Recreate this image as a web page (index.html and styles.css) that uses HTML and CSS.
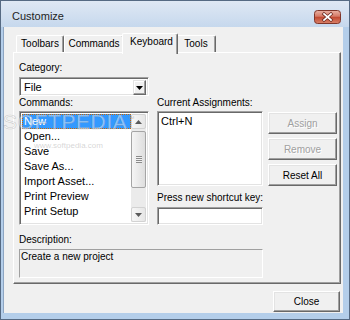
FILE: index.html
```html
<!DOCTYPE html>
<html lang="en">
<head>
  <meta charset="UTF-8" />
  <meta name="viewport" content="width=device-width, initial-scale=1.0"/>
  <title>Customize</title>
  <link rel="stylesheet" href="styles.css">
</head>
<body>

  <div class="window">
    <div class="titlebar">
      <span class="title">Customize</span>
      <div class="btn-close-x">
        <svg width="27" height="14" viewBox="0 0 27 14">
          <defs>
            <linearGradient id="rojo" x1="0" y1="0" x2="0" y2="1">
              <stop offset="0" stop-color="#eab2a4"/>
              <stop offset="0.45" stop-color="#d57a66"/>
              <stop offset="0.5" stop-color="#c1472f"/>
              <stop offset="1" stop-color="#d9826a"/>
            </linearGradient>
          </defs>
          <rect x="0.5" y="0.5" width="26" height="13" rx="3" fill="url(#rojo)" stroke="#80362a"/>
          <path d="M10 4 L17 10 M17 4 L10 10" stroke="#6b2a20" stroke-width="3.2" stroke-linecap="square"/>
          <path d="M10 4 L17 10 M17 4 L10 10" stroke="#fff" stroke-width="1.7" stroke-linecap="square"/>
        </svg>
      </div>
    </div>

    <div class="client">
      <div class="tabs">
        <div class="tab w-toolbars">Toolbars</div>
        <div class="tab w-commands">Commands</div>
        <div class="tab tab-active">Keyboard</div>
        <div class="tab w-tools">Tools</div>
      </div>

      <div class="panel">
        <div class="label">Category:</div>
        <div class="combo sunken">
          <span class="combo-text">File</span>
          <div class="combo-btn">
            <svg width="7" height="4" viewBox="0 0 7 4"><polygon points="0,0 7,0 3.5,4" fill="#000"/></svg>
          </div>
        </div>

        <div class="row">
          <div class="col-left">
            <div class="label">Commands:</div>
            <div class="list sunken">
              <ul class="items">
                <li class="selected">New</li>
                <li>Open...</li>
                <li>Save</li>
                <li>Save As...</li>
                <li>Import Asset...</li>
                <li>Print Preview</li>
                <li>Print Setup</li>
                <li>Print</li>
              </ul>
              <div class="scroll">
                <div class="scroll-btn">
                  <svg width="7" height="4" viewBox="0 0 7 4"><polygon points="0,4 7,4 3.5,0" fill="#5a5a5a"/></svg>
                </div>
                <div class="track">
                  <div class="thumb"><span class="grip"></span></div>
                </div>
                <div class="scroll-btn">
                  <svg width="7" height="4" viewBox="0 0 7 4"><polygon points="0,0 7,0 3.5,4" fill="#5a5a5a"/></svg>
                </div>
              </div>
            </div>
          </div>

          <div class="col-mid">
            <div class="label">Current Assignments:</div>
            <div class="assign-box sunken">Ctrl+N</div>
            <div class="label label-press">Press new shortcut key:</div>
            <div class="key-input sunken"></div>
          </div>

          <div class="col-btns">
            <button class="btn disabled">Assign</button>
            <button class="btn disabled">Remove</button>
            <button class="btn">Reset All</button>
          </div>
        </div>

        <div class="label label-desc">Description:</div>
        <div class="description">Create a new project</div>
      </div>

      <div class="footer">
        <button class="btn btn-close">Close</button>
      </div>
    </div>

    <!-- marca de agua de la captura -->
    <div class="watermark">SOFTPEDIA<sup>™</sup></div>
    <div class="watermark-url">www.softpedia.com</div>
  </div>

</body>
</html>
```

FILE: styles.css
```css
    body {
      margin: 0;
      font-family: "Liberation Sans", Arial, sans-serif;
      font-size: 10px;
      color: #000;
    }
    .window {
      position: relative;
      width: 350px;
      height: 320px;
      box-sizing: border-box;
      border: 1px solid #566a83;
      padding: 0 6px 6px 3px;
      background: linear-gradient(#dfe8f4 0, #c6d8ed 26px, #b4ceea 26px);
      overflow: hidden;
    }
    .titlebar {
      height: 26px;
      display: flex;
      align-items: flex-start;
      justify-content: space-between;
      padding: 9px 2px 0 8px;
      box-sizing: border-box;
    }
    .title {
      font-size: 11px;
      line-height: 13px;
      color: #1e1e1e;
    }
    .btn-close-x svg {
      display: block;
    }
    .client {
      height: 286px;
      background-color: #f0f0f0;
      box-shadow: -1px 0 0 #8da5c2;
    }
    .tabs {
      display: flex;
      align-items: flex-end;
      height: 25px;
      padding-left: 12px;
    }
    .tab {
      height: 17px;
      box-sizing: border-box;
      line-height: 16px;
      text-align: center;
      border: 1px solid;
      border-color: #fff #696969 transparent #fff;
      border-bottom: none;
      border-radius: 2px 2px 0 0;
      box-shadow: inset -1px 0 0 #a0a0a0;
    }
    .w-toolbars { width: 48px; }
    .w-commands { width: 60px; }
    .w-tools { width: 40px; }
    .tab-active {
      position: relative;
      z-index: 1;
      width: 56px;
      height: 21px;
      margin: 0 -2px -2px;
      line-height: 16px;
      padding-left: 3px;
      background-color: #f0f0f0;
    }
    .panel {
      position: relative;
      margin-left: 9px;
      width: 328px;
      height: 232px;
      box-sizing: border-box;
      border: 1px solid;
      border-color: #fff #696969 #696969 #fff;
      box-shadow: inset -1px -1px 0 #a0a0a0;
      padding: 9px 0 0 5px;
    }
    .label {
      height: 12px;
      line-height: 12px;
      white-space: nowrap;
    }
    .sunken {
      box-sizing: border-box;
      background-color: #fff;
      border: 1px solid;
      border-color: #a0a0a0 #fff #fff #a0a0a0;
      box-shadow: inset 1px 1px 0 #696969, inset -1px -1px 0 #e3e3e3;
    }
    .combo {
      margin-top: 3px;
      width: 130px;
      height: 19px;
      display: flex;
      padding: 2px;
    }
    .combo-text {
      flex: 1;
      font-size: 11px;
      line-height: 15px;
      padding-left: 2px;
    }
    .combo-btn {
      width: 13px;
      height: 15px;
      box-sizing: border-box;
      display: flex;
      align-items: center;
      justify-content: center;
      background-color: #f0f0f0;
      border: 1px solid;
      border-color: #e3e3e3 #696969 #696969 #e3e3e3;
      box-shadow: inset -1px -1px 0 #a0a0a0, inset 1px 1px 0 #fff;
    }
    .combo-btn svg, .scroll-btn svg {
      display: block;
    }
    .row {
      display: flex;
      margin-top: 1px;
    }
    .col-left {
      width: 130px;
    }
    .list {
      margin-top: 2px;
      height: 114px;
      display: flex;
      padding: 2px;
    }
    .items {
      flex: 1;
      list-style: none;
      margin: 0;
      padding: 0;
      overflow: hidden;
      font-size: 11px;
    }
    .items li {
      height: 15px;
      line-height: 13px;
      box-sizing: border-box;
      border: 1px solid transparent;
      padding-left: 1px;
      white-space: nowrap;
    }
    .items li.selected {
      background-color: #3399ff;
      color: #fff;
      border: 1px dotted #cc6600;
    }
    .scroll {
      width: 15px;
      display: flex;
      flex-direction: column;
      background-color: #ebebeb;
    }
    .scroll-btn {
      height: 15px;
      box-sizing: border-box;
      display: flex;
      align-items: center;
      justify-content: center;
      border: 1px solid #d2d2d2;
      border-radius: 2px;
      background: linear-gradient(to right, #f7f7f7, #e6e6e6);
    }
    .track {
      flex: 1;
      padding-top: 2px;
    }
    .thumb {
      height: 57px;
      box-sizing: border-box;
      border: 1px solid #a5a5a5;
      border-radius: 2px;
      background: linear-gradient(to right, #f5f5f5, #dedede);
      display: flex;
      align-items: center;
      justify-content: center;
    }
    .grip {
      width: 6px;
      height: 7px;
      background: repeating-linear-gradient(#8b8b8b 0, #8b8b8b 1px, #f2f2f2 1px, #f2f2f2 2px);
    }
    .col-mid {
      width: 106px;
      margin-left: 8px;
    }
    .assign-box {
      margin-top: 2px;
      height: 75px;
      padding: 2px 3px;
      font-size: 11px;
      line-height: 15px;
    }
    .label-press {
      margin-top: 6px;
    }
    .key-input {
      margin-top: 3px;
      height: 18px;
    }
    .col-btns {
      width: 69px;
      margin-left: 5px;
      padding-top: 15px;
      display: flex;
      flex-direction: column;
      gap: 4px;
    }
    .btn {
      height: 22px;
      width: 69px;
      padding: 0;
      font-family: "Liberation Sans", Arial, sans-serif;
      font-size: 10px;
      color: #000;
      background-color: #f0f0f0;
      border: 1px solid;
      border-color: #fff #696969 #696969 #fff;
      box-shadow: inset -1px -1px 0 #a0a0a0, inset 1px 1px 0 #e3e3e3;
    }
    .btn.disabled {
      color: #a0a0a0;
      text-shadow: 1px 1px 0 #fff;
    }
    .label-desc {
      margin-top: 9px;
    }
    .description {
      margin-top: 3px;
      width: 244px;
      height: 29px;
      box-sizing: border-box;
      border: 1px solid;
      border-color: #a0a0a0 #fff #fff #a0a0a0;
      padding-left: 1px;
      line-height: 13px;
    }
    .footer {
      display: flex;
      justify-content: flex-end;
      margin-top: 7px;
      padding-right: 3px;
    }
    .btn-close {
      width: 67px;
      height: 21px;
    }
    .watermark {
      position: absolute;
      left: 2px;
      top: 109px;
      font-size: 21px;
      letter-spacing: 0.6px;
      color: rgba(255, 255, 255, 0.45);
      -webkit-text-stroke: 0.6px rgba(120, 120, 120, 0.35);
      pointer-events: none;
    }
    .watermark sup {
      font-size: 7px;
      -webkit-text-stroke: 0;
      color: rgba(150, 150, 150, 0.5);
    }
    .watermark-url {
      position: absolute;
      left: 33px;
      top: 140px;
      font-size: 8px;
      color: rgba(150, 150, 150, 0.4);
      pointer-events: none;
    }
```
